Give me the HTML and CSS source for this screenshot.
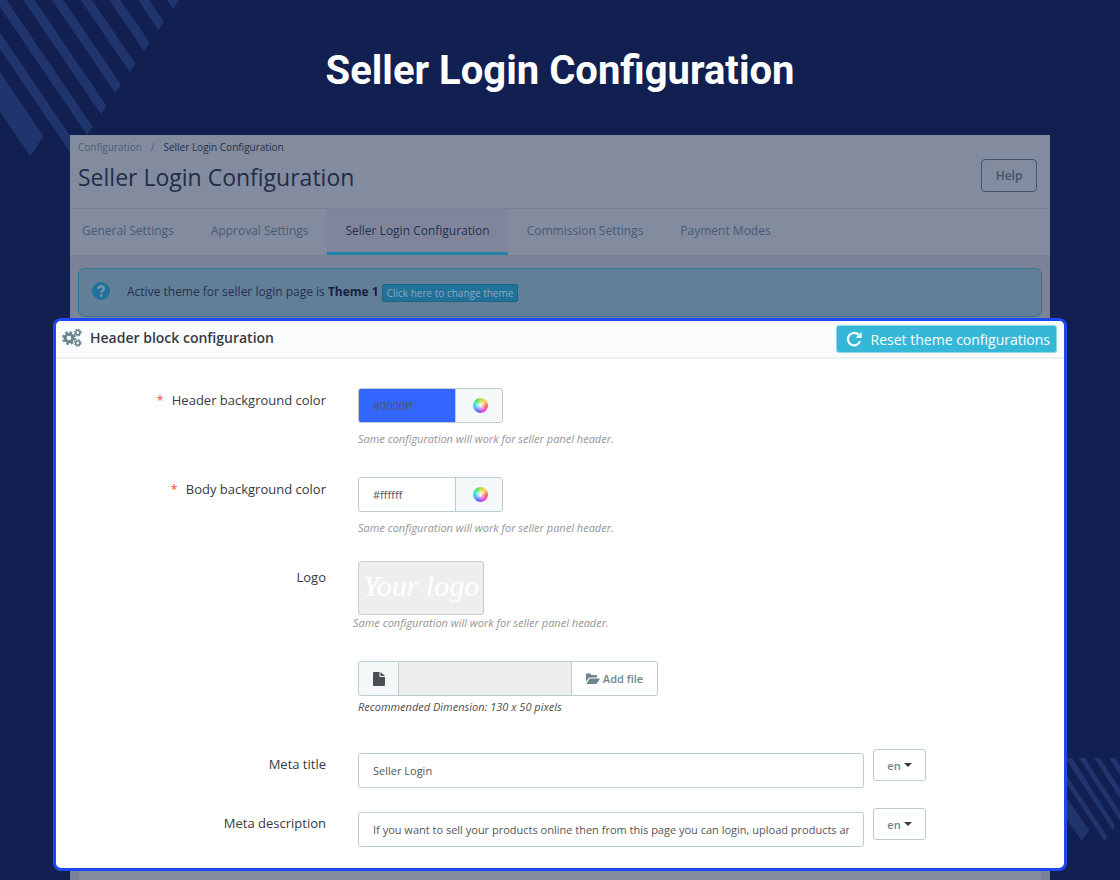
FILE: index.html
```
<!DOCTYPE html>
<html lang="en">

<head>
    <meta charset="UTF-8">
    <meta name="viewport" content="width=device-width, initial-scale=1.0">
    <link rel="stylesheet" href="styles.css">
    <title>Seller Login Configuration</title>
</head>

<body>
    <!-- background stripes -->
    <svg class="stripes stripes-top" width="180" height="160" viewBox="0 0 540 480" aria-hidden="true">
        <defs>
            <path id="stripe" d="M0 0 L17 -25 L-323 -525 L-340 -500 Z" />
        </defs>
        <use href="#stripe" x="519" y="26" />
        <use href="#stripe" x="475" y="90" />
        <use href="#stripe" x="432" y="153" />
        <use href="#stripe" x="389" y="216" />
        <use href="#stripe" x="346" y="279" />
        <use href="#stripe" x="303" y="343" />
        <use href="#stripe" x="261" y="405" />
        <use href="#stripe" x="218" y="468" />
        <path d="M91 468 L131 409 L0 217 V336 Z" />
    </svg>
    <svg class="stripes stripes-bottom" width="60" height="84" viewBox="0 0 180 252" aria-hidden="true">
        <path d="M66 249 L87 217 L0 90 V153 Z" />
        <path d="M134 249 L142 236 L0 22 V48 Z" />
        <path d="M158 216 L165 203 L37 0 H15 Z" />
        <path d="M180 189 V162 L75 0 H57 Z" />
        <path d="M180 120 V92 L120 0 H102 Z" />
        <path d="M180 51 V23 L165 0 H147 Z" />
    </svg>

    <h1 class="title">Seller Login Configuration</h1>

    <main class="screen">
        <header class="page-head">
            <div>
                <nav class="breadcrumb">
                    <a href="#">Configuration</a>
                    <span>/</span>
                    <a href="#" class="current">Seller Login Configuration</a>
                </nav>
                <h2>Seller Login Configuration</h2>
            </div>
            <button type="button" class="help">Help</button>
        </header>

        <nav class="tabs">
            <a href="#">General Settings</a>
            <a href="#">Approval Settings</a>
            <a href="#" class="active">Seller Login Configuration</a>
            <a href="#">Commission Settings</a>
            <a href="#">Payment Modes</a>
        </nav>

        <div class="alert">
            <svg width="18" height="18" viewBox="0 0 18 18" aria-hidden="true">
                <circle cx="9" cy="9" r="9" fill="#1f7299" />
                <path d="M6.2 7 C6.2 3.4 11.9 3.6 11.9 6.8 C11.9 8.8 9.2 8.8 9.2 10.8" fill="none" stroke="#8094ab" stroke-width="2.2" />
                <rect x="8" y="12.2" width="2.4" height="2.4" fill="#8094ab" />
            </svg>
            <p>Active theme for seller login page is <b>Theme 1</b></p>
            <button type="button" class="change">Click here to change theme</button>
        </div>

        <section class="card">
            <header class="card-head">
                <svg class="cogs" width="20" height="20" viewBox="0 0 20 20" aria-hidden="true">
                    <g fill="none" stroke="#6c868e">
                        <circle cx="7" cy="10" r="3.8" stroke-width="3" />
                        <circle cx="7" cy="10" r="5.8" stroke-width="2.2" stroke-dasharray="2.5 2.055" />
                        <circle cx="15.8" cy="4.6" r="2.1" stroke-width="1.5" />
                        <circle cx="15.8" cy="4.6" r="3.2" stroke-width="1.4" stroke-dasharray="1.4 1.113" />
                        <circle cx="15.8" cy="15" r="2.1" stroke-width="1.5" />
                        <circle cx="15.8" cy="15" r="3.2" stroke-width="1.4" stroke-dasharray="1.4 1.113" />
                    </g>
                </svg>
                <h3>Header block configuration</h3>
                <button type="button" class="reset">
                    <svg width="16" height="16" viewBox="0 0 16 16" aria-hidden="true">
                        <path d="M12.6 3.8 A6.2 6.2 0 1 0 14 10.2" fill="none" stroke="#fff" stroke-width="2.1" />
                        <path d="M15.6 1 V7 H9.6 Z" fill="#fff" />
                    </svg>
                    Reset theme configurations
                </button>
            </header>

            <form class="form">
                <div class="row">
                    <label for="header-color"><i>*</i>Header background color</label>
                    <div class="field">
                        <div class="color">
                            <input type="text" id="header-color" class="blue" value="#0000ff">
                            <button type="button" aria-label="Pick header color"><span class="wheel"></span></button>
                        </div>
                        <p class="hint">Same configuration will work for seller panel header.</p>
                    </div>
                </div>

                <div class="row">
                    <label for="body-color"><i>*</i>Body background color</label>
                    <div class="field">
                        <div class="color">
                            <input type="text" id="body-color" value="#ffffff">
                            <button type="button" aria-label="Pick body color"><span class="wheel"></span></button>
                        </div>
                        <p class="hint">Same configuration will work for seller panel header.</p>
                    </div>
                </div>

                <div class="row logo-row">
                    <label for="logo-file">Logo</label>
                    <div class="field">
                        <div class="logo">Your logo</div>
                        <p class="hint">Same configuration will work for seller panel header.</p>
                        <div class="file">
                            <span class="file-icon">
                                <svg width="12" height="14" viewBox="0 0 12 14" aria-hidden="true">
                                    <path d="M1 0 H6.5 V5 H12 V13 Q12 14 11 14 H1 Q0 14 0 13 V1 Q0 0 1 0 Z M7.5 0 L12 4 H7.5 Z" fill="#4d4e55" />
                                </svg>
                            </span>
                            <input type="text" id="logo-file" readonly>
                            <button type="button">
                                <svg width="14" height="12" viewBox="0 0 14 12" aria-hidden="true">
                                    <path d="M0 9 V1.5 Q0 .5 1 .5 H4 Q5 .5 5 1.5 V2 H10 Q11 2 11 3 V4.5 H4.5 Q3 4.5 2.3 5.5 Z" fill="#6c868e" />
                                    <path d="M4.6 5.5 H13.3 Q14 5.5 13.6 6.2 L11.4 9.8 Q10.8 11 9.6 11 H1 Q.2 11 .8 10.2 L3 6.5 Q3.6 5.5 4.6 5.5 Z" fill="#6c868e" />
                                </svg>
                                Add file
                            </button>
                        </div>
                        <p class="hint dark">Recommended Dimension: 130 x 50 pixels</p>
                    </div>
                </div>

                <div class="row meta">
                    <label for="meta-title">Meta title</label>
                    <div class="field">
                        <input type="text" id="meta-title" value="Seller Login">
                        <button type="button">en<span class="caret"></span></button>
                    </div>
                </div>

                <div class="row meta">
                    <label for="meta-desc">Meta description</label>
                    <div class="field">
                        <input type="text" id="meta-desc" value="If you want to sell your products online then from this page you can login, upload products and manage orders">
                        <button type="button">en<span class="caret"></span></button>
                    </div>
                </div>
            </form>
        </section>

        <div class="rest"></div>
    </main>
</body>

</html>
```
FILE: styles.css
```
* {
    box-sizing: border-box;
    margin: 0;
    padding: 0;
}

body {
    background-color: #112050;
    font-family: 'Open Sans', sans-serif;
    font-size: 13px;
    color: #363a41;
    min-height: 100vh;
    overflow: hidden;
}

a {
    text-decoration: none;
    color: inherit;
}

button, input {
    font-family: inherit;
}

button {
    cursor: pointer;
}

.stripes {
    position: absolute;
    z-index: -1;
    fill: #20356d;
}

.stripes-top {
    top: 0;
    left: 0;
}

.stripes-bottom {
    right: 0;
    top: 758px;
}

.title {
    font-family: Roboto, sans-serif;
    font-size: 40px;
    font-weight: 700;
    line-height: 48px;
    color: white;
    text-align: center;
    padding: 47px 0 40px;
}

/* dimmed admin page */
.screen {
    margin: 0 70px;
    background-color: #7c8398;
}

.page-head {
    display: flex;
    justify-content: space-between;
    align-items: flex-start;
    height: 74px;
    padding: 4px 13px 0 8px;
    background-color: #838b9e;
    border-bottom: 1px solid #788094;
}

.breadcrumb {
    display: flex;
    gap: 9px;
    font-size: 10px;
    line-height: 16px;
    color: #4e5c75;
}

.breadcrumb .current {
    color: #253050;
}

.page-head h2 {
    font-size: 23px;
    font-weight: 400;
    line-height: 32px;
    margin-top: 6px;
    color: #212d4a;
}

.help {
    width: 56px;
    height: 33px;
    margin-top: 20px;
    font-size: 12px;
    font-weight: 600;
    color: #41546f;
    background: none;
    border: 1px solid #41546f;
    border-radius: 4px;
}

.tabs {
    display: flex;
    gap: 1px;
    height: 47px;
    background-color: #838b9e;
    border-bottom: 1px solid #788094;
    font-size: 12px;
    line-height: 44px;
    color: #465b75;
}

.tabs a {
    padding: 0 18px;
}

.tabs a:first-child {
    padding-left: 12px;
}

.tabs .active {
    color: #253050;
    background-color: #7f869c;
    border-bottom: 3px solid #2380a6;
}

.alert {
    display: flex;
    align-items: center;
    height: 49px;
    margin: 12px 8px 0;
    padding: 0 13px 3px;
    background-color: #627f98;
    border: 1px solid #33789b;
    border-radius: 7px;
    font-size: 12px;
    color: #253050;
}

.alert svg {
    margin-right: 17px;
}

.alert b {
    color: #17213f;
}

.change {
    height: 18px;
    margin-top: 3px;
    margin-left: 3px;
    padding: 0 4px;
    font-size: 10px;
    font-weight: 500;
    color: #8fa6ba;
    background-color: #1f7299;
    border: 1px solid #1c6389;
    border-radius: 2px;
}

/* highlighted block */
.card {
    position: relative;
    margin: 1px -17px 0;
    background-color: white;
    border: 3px solid #1f48f5;
    border-radius: 8px;
    overflow: hidden;
}

.card-head {
    display: flex;
    align-items: center;
    height: 38px;
    padding: 0 7px 0 6px;
    background-color: #fafbfc;
    border-bottom: 2px solid #edf1f2;
}

.cogs {
    margin-bottom: 3px;
}

.card-head h3 {
    font-size: 14px;
    font-weight: 600;
    margin: 0 0 3px 8px;
}

.reset {
    display: flex;
    align-items: center;
    gap: 9px;
    height: 28px;
    margin-left: auto;
    padding: 0 6px 0 9px;
    font-size: 14px;
    font-weight: 500;
    color: white;
    background-color: #35b8d8;
    border: 1px solid #8fd8e8;
    border-radius: 3px;
}

.form {
    padding: 29px 0 21px;
}

.row {
    display: grid;
    grid-template-columns: 270px 1fr;
    column-gap: 32px;
    margin-bottom: 30px;
}

.row label {
    text-align: right;
    line-height: 24px;
}

.row label i {
    color: #f54c3e;
    font-style: normal;
    margin-right: 8px;
}

.row input {
    height: 35px;
    padding: 0 14px;
    font-size: 11px;
    color: #555;
    background-color: white;
    border: 1px solid #bbcdd2;
    border-radius: 3px;
    min-width: 0;
}

.row button {
    font-size: 11px;
    font-weight: 600;
    color: #6c868e;
    background-color: white;
    border: 1px solid #bbcdd2;
    border-radius: 3px;
}

.hint {
    font-size: 11px;
    font-style: italic;
    line-height: 16px;
    margin-top: 8px;
    color: #959595;
}

.hint.dark {
    margin-top: 3px;
    color: #4d4d4d;
}

.color, .file {
    display: flex;
}

.row .color input {
    width: 98px;
    border-radius: 3px 0 0 3px;
}

.row .color .blue {
    background-color: #3366ff;
}

.row .color button {
    display: flex;
    justify-content: center;
    align-items: center;
    width: 48px;
    margin-left: -1px;
    padding-left: 2px;
    background-color: #f5f8f9;
    border-radius: 0 3px 3px 0;
}

.wheel {
    width: 15px;
    height: 15px;
    border-radius: 50%;
    background: radial-gradient(circle, #fff, rgba(255, 255, 255, 0) 55%),
        conic-gradient(#b8e04a, #ffd24a 50deg, #fa5858 100deg, #f048d8 150deg, #7060f0 200deg, #40b8ff 250deg, #48e8c8 290deg, #58e058 330deg, #b8e04a);
}

.logo-row {
    margin-top: -5px;
    margin-bottom: 34px;
}

.logo-row label {
    padding-top: 4px;
}

.logo {
    width: 126px;
    height: 54px;
    line-height: 48px;
    font-family: 'Liberation Serif', serif;
    font-size: 30px;
    font-style: italic;
    text-align: center;
    color: white;
    background-color: #eee;
    border: 1px solid #ccc;
    border-radius: 3px;
}

.logo + .hint {
    margin: 0 0 30px -5px;
}

.file-icon {
    display: flex;
    justify-content: center;
    align-items: center;
    width: 41px;
    background-color: #f5f8f9;
    border: 1px solid #bbcdd2;
    border-radius: 3px 0 0 3px;
}

.row .file input {
    width: 174px;
    margin: 0 -1px;
    background-color: #eee;
    border-radius: 0;
}

.row .file button {
    display: flex;
    justify-content: center;
    align-items: center;
    gap: 3px;
    width: 87px;
    border-radius: 0 3px 3px 0;
}

.meta {
    margin-bottom: 20px;
}

.meta:last-child {
    margin-bottom: 0;
}

.meta label {
    padding-top: 3px;
}

.meta .field {
    display: grid;
    grid-template-columns: 506px 53px;
    column-gap: 9px;
}

.meta input {
    margin-top: 4px;
}

.meta button {
    display: flex;
    justify-content: center;
    align-items: center;
    gap: 3px;
    height: 32px;
}

.caret {
    border: 4px solid transparent;
    border-top-color: #363a41;
    border-bottom: 0;
}

.rest {
    height: 20px;
    margin: 0 9px;
    background-color: #838b9e;
}
```
